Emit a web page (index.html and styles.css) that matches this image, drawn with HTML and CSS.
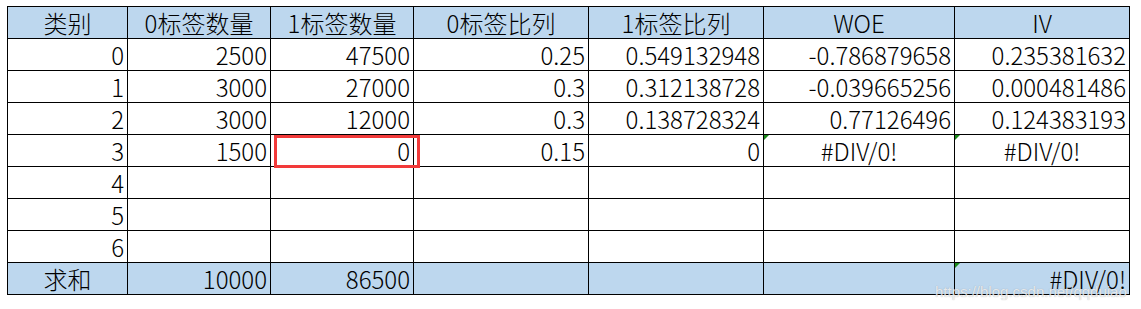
FILE: index.html
```html
<!DOCTYPE html>
<html lang="zh">
<head>
<meta charset="utf-8">
<link rel="stylesheet" href="styles.css">
</head>
<body>
<div class="sheet">
  <div class="grid">
    <div class="c hd">类别</div>
    <div class="c hd">0标签数量</div>
    <div class="c hd">1标签数量</div>
    <div class="c hd">0标签比列</div>
    <div class="c hd">1标签比列</div>
    <div class="c hd">WOE</div>
    <div class="c hd">IV</div>

    <div class="c">0</div>
    <div class="c">2500</div>
    <div class="c">47500</div>
    <div class="c">0.25</div>
    <div class="c">0.549132948</div>
    <div class="c">-0.786879658</div>
    <div class="c">0.235381632</div>

    <div class="c">1</div>
    <div class="c">3000</div>
    <div class="c">27000</div>
    <div class="c">0.3</div>
    <div class="c">0.312138728</div>
    <div class="c">-0.039665256</div>
    <div class="c">0.000481486</div>

    <div class="c">2</div>
    <div class="c">3000</div>
    <div class="c">12000</div>
    <div class="c">0.3</div>
    <div class="c">0.138728324</div>
    <div class="c">0.77126496</div>
    <div class="c">0.124383193</div>

    <div class="c">3</div>
    <div class="c">1500</div>
    <div class="c sel">0<span class="selbox"></span></div>
    <div class="c">0.15</div>
    <div class="c">0</div>
    <div class="c ctr flag">#DIV/0!</div>
    <div class="c ctr flag">#DIV/0!</div>

    <div class="c">4</div>
    <div class="c"></div>
    <div class="c"></div>
    <div class="c"></div>
    <div class="c"></div>
    <div class="c"></div>
    <div class="c"></div>

    <div class="c">5</div>
    <div class="c"></div>
    <div class="c"></div>
    <div class="c"></div>
    <div class="c"></div>
    <div class="c"></div>
    <div class="c"></div>

    <div class="c">6</div>
    <div class="c"></div>
    <div class="c"></div>
    <div class="c"></div>
    <div class="c"></div>
    <div class="c"></div>
    <div class="c"></div>

    <div class="c sum ctr">求和</div>
    <div class="c sum">10000</div>
    <div class="c sum">86500</div>
    <div class="c sum"></div>
    <div class="c sum"></div>
    <div class="c sum"></div>
    <div class="c sum flag">#DIV/0!</div>
  </div>
  <div class="watermark">https://blog.csdn.net/qqduiao</div>
</div>
</body>
</html>
```
FILE: styles.css
```css
html, body {
  margin: 0;
  padding: 0;
  background: #ffffff;
}
.sheet {
  position: relative;
  padding: 6px 0 0 7px;
  width: 1141px;
  height: 309px;
  box-sizing: border-box;
}
.grid {
  display: grid;
  grid-template-columns: 120px 143px 143px 175px 175px 191px 175px;
  grid-auto-rows: 32px;
  width: max-content;
  border-left: 1px solid #000;
  border-top: 1px solid #000;
  font-family: "Noto Sans CJK SC", "Noto Sans", sans-serif;
  font-weight: 300;
  font-size: 24px;
  color: #000;
}
.c {
  position: relative;
  border-right: 1px solid #000;
  border-bottom: 1px solid #000;
  display: flex;
  align-items: center;
  justify-content: flex-end;
  padding: 1px 3px 0 0;
  line-height: 1;
  white-space: nowrap;
  overflow: visible;
}
.hd {
  background: #bdd7ee;
  justify-content: center;
  padding: 0;
}
.ctr {
  justify-content: center;
  padding-right: 0;
}
.sum {
  background: #bdd7ee;
}
.flag::before {
  content: "";
  position: absolute;
  left: 0;
  top: 0;
  border-top: 5px solid #1a8a1a;
  border-right: 5px solid transparent;
}
.selbox {
  position: absolute;
  left: 3px;
  top: 0;
  width: 146px;
  height: 33px;
  box-sizing: border-box;
  border: 3px solid #f23a3a;
  z-index: 2;
}
.watermark {
  position: absolute;
  left: 935px;
  top: 283px;
  font-family: "Liberation Sans", Arial, sans-serif;
  font-size: 15px;
  color: rgba(255, 255, 255, 0.75);
  text-shadow: 0 0 1px rgba(120, 120, 120, 0.6);
  white-space: nowrap;
}
```
